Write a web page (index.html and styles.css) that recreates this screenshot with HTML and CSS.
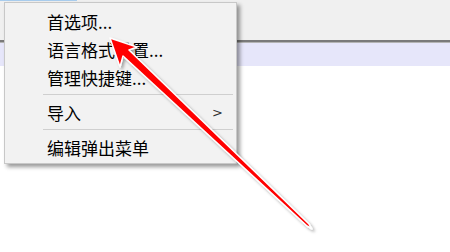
FILE: index.html
```html
<!DOCTYPE html>
<html lang="zh-CN">
<head>
    <meta charset="UTF-8">
    <meta name="viewport" content="width=device-width, initial-scale=1.0">
    <title>弹出菜单</title>
    <link rel="stylesheet" href="styles.css">
</head>
<body>
    <div class="window">
        <div class="toolbar">
            <div class="tab-edge"></div>
        </div>
        <div class="divider"></div>
        <div class="row-selected"></div>
        <div class="content"></div>

        <ul class="popup-menu">
            <li class="menu-item">首选项...</li>
            <li class="menu-item">语言格式设置...</li>
            <li class="menu-item">管理快捷键...</li>
            <li class="menu-sep"></li>
            <li class="menu-item has-sub">导入<span class="chevron">&gt;</span></li>
            <li class="menu-sep"></li>
            <li class="menu-item">编辑弹出菜单</li>
        </ul>

        <svg class="annotation" width="450" height="252" viewBox="0 0 450 252">
            <defs>
                <filter id="arrowShadow" x="-10%" y="-10%" width="130%" height="130%">
                    <feDropShadow dx="2" dy="2" stdDeviation="1.5" flood-color="#000" flood-opacity="0.35"/>
                </filter>
            </defs>
            <polygon filter="url(#arrowShadow)"
                     points="110,38 137,47 129,50 309,224 312,229 307,226 123,56 120,67"
                     fill="#ff0000" stroke="#ffffff" stroke-width="1.5" stroke-linejoin="round"/>
        </svg>
    </div>
</body>
</html>
```

FILE: styles.css
```css
* {
    box-sizing: border-box;
}

body {
    margin: 0;
    font-family: "Noto Sans CJK SC", "Noto Sans", sans-serif;
    background-color: #ffffff;
}

.window {
    position: relative;
    width: 450px;
    height: 252px;
    overflow: hidden;
    display: flex;
    flex-direction: column;
}

.toolbar {
    height: 40px;
    background-color: #f0f0f0;
}

.tab-edge {
    width: 77px;
    height: 1px;
    background-color: #a9cdee;
}

.divider {
    height: 3px;
    background-color: #7a7a7a;
    border-bottom: 1px solid #b4b4b4;
}

.row-selected {
    height: 23px;
    background-color: #e6e6fa;
}

.content {
    flex: 1;
    background-color: #ffffff;
}

/* popup menu lies over the window */
.popup-menu {
    position: absolute;
    left: 4px;
    top: 2px;
    width: 233px;
    margin: 0;
    padding: 4px 3px 2px 3px;
    list-style: none;
    background-color: #f2f2f2;
    border: 1px solid #c8c8c8;
    box-shadow: 3px 3px 4px rgba(0, 0, 0, 0.4);
}

.menu-item {
    display: flex;
    align-items: center;
    height: 28px;
    padding-left: 39px;
    padding-right: 10px;
    font-size: 17px;
    color: #000000;
}

.has-sub {
    justify-content: space-between;
}

.chevron {
    font-family: "DejaVu Sans", sans-serif;
    font-size: 13px;
    color: #333333;
}

.menu-sep {
    height: 7px;
    margin-left: 35px;
    display: flex;
    align-items: center;
}

.menu-sep::before {
    content: "";
    flex: 1;
    height: 1px;
    background-color: #cfcfcf;
}

.annotation {
    position: absolute;
    left: 0;
    top: 0;
    pointer-events: none;
}
```
